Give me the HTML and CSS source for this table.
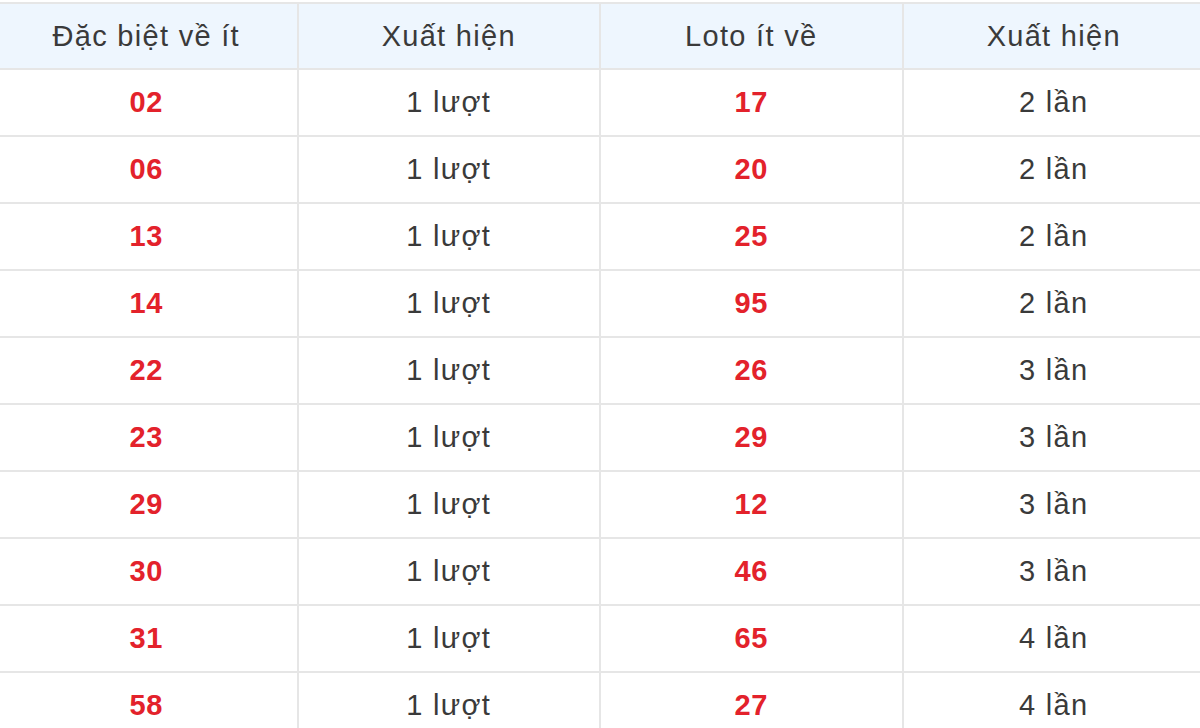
FILE: index.html
```html
<!DOCTYPE html>
<html lang="vi">
<head>
<meta charset="utf-8">
<link rel="stylesheet" href="styles.css">
</head>
<body>
<div class="wrap">
<table class="stats">
<thead>
<tr><th>Đặc biệt về ít</th><th>Xuất hiện</th><th>Loto ít về</th><th>Xuất hiện</th></tr>
</thead>
<tbody>
<tr><td class="num">02</td><td>1 lượt</td><td class="num">17</td><td>2 lần</td></tr>
<tr><td class="num">06</td><td>1 lượt</td><td class="num">20</td><td>2 lần</td></tr>
<tr><td class="num">13</td><td>1 lượt</td><td class="num">25</td><td>2 lần</td></tr>
<tr><td class="num">14</td><td>1 lượt</td><td class="num">95</td><td>2 lần</td></tr>
<tr><td class="num">22</td><td>1 lượt</td><td class="num">26</td><td>3 lần</td></tr>
<tr><td class="num">23</td><td>1 lượt</td><td class="num">29</td><td>3 lần</td></tr>
<tr><td class="num">29</td><td>1 lượt</td><td class="num">12</td><td>3 lần</td></tr>
<tr><td class="num">30</td><td>1 lượt</td><td class="num">46</td><td>3 lần</td></tr>
<tr><td class="num">31</td><td>1 lượt</td><td class="num">65</td><td>4 lần</td></tr>
<tr><td class="num">58</td><td>1 lượt</td><td class="num">27</td><td>4 lần</td></tr>
</tbody>
</table>
</div>
</body>
</html>
```
FILE: styles.css
```css
html, body {
  margin: 0;
  padding: 0;
  background: #ffffff;
}
.wrap {
  width: 1200px;
  height: 728px;
  overflow: hidden;
  padding-top: 2px;
  box-sizing: border-box;
}
.stats {
  width: 1212px;
  margin: 0 -6px 0 -6px;
  border-collapse: collapse;
  table-layout: fixed;
  font-family: "Liberation Sans", Arial, sans-serif;
  font-size: 29px;
  color: #3a3a3a;
  letter-spacing: 1.3px;
}
.stats th, .stats td {
  border: 2px solid #e6e6e6;
  text-align: center;
  vertical-align: middle;
  padding: 0;
}
.stats th {
  height: 64px;
  font-weight: normal;
  background: #eef6fe;
}
.stats td {
  height: 65px;
}
.stats td.num {
  color: #e3222b;
  font-weight: bold;
  letter-spacing: 0.5px;
}
```
